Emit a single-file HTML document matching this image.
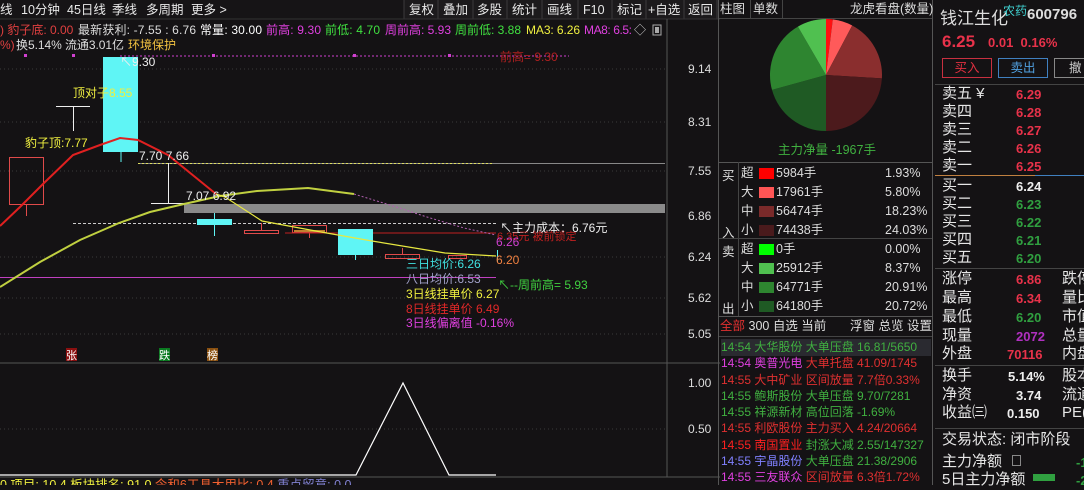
<!DOCTYPE html>
<html><head><meta charset="utf-8"><style>
*{margin:0;padding:0;box-sizing:border-box}
body{width:1084px;height:485px;overflow:hidden;background:#141214;font-family:"Liberation Sans","Noto Sans CJK SC",sans-serif;color:#ddd;position:relative}
.a{position:absolute;white-space:nowrap}
.r13{font-size:12.5px;line-height:19px}
.num{font-weight:bold;font-family:"Liberation Sans",sans-serif}
</style></head><body>

<!-- top toolbar -->
<svg class="a" style="left:0;top:0" width="720" height="20" font-family="Liberation Sans,Noto Sans CJK SC,sans-serif">
<rect x="0" y="0" width="720" height="19" fill="#161416"/>
<rect x="404" y="0" width="314" height="19" fill="#1c1a1c"/>
<g stroke="#3c3a3c"><line x1="404" y1="0" x2="404" y2="19"/><line x1="438" y1="0" x2="438" y2="19"/><line x1="473" y1="0" x2="473" y2="19"/><line x1="507" y1="0" x2="507" y2="19"/><line x1="542" y1="0" x2="542" y2="19"/><line x1="578" y1="0" x2="578" y2="19"/><line x1="612" y1="0" x2="612" y2="19"/><line x1="646" y1="0" x2="646" y2="19"/><line x1="684" y1="0" x2="684" y2="19"/><line x1="717" y1="0" x2="717" y2="19"/></g>
<line x1="0" y1="19" x2="720" y2="19" stroke="#333"/>
<g font-size="12.5" fill="#e8e8e8">
<text x="0" y="14">线</text><text x="21" y="14">10分钟</text><text x="67" y="14">45日线</text><text x="112" y="14">季线</text><text x="146" y="14">多周期</text><text x="191" y="14">更多 &gt;</text>
<text x="409" y="14">复权</text><text x="443" y="14">叠加</text><text x="477" y="14">多股</text><text x="512" y="14">统计</text><text x="547" y="14">画线</text><text x="583" y="14">F10</text><text x="617" y="14">标记</text><text x="648" y="14">+自选</text><text x="688" y="14">返回</text>
</g>
</svg>

<!-- main chart -->
<svg class="a" style="left:0;top:19px" width="720" height="466" viewBox="0 19 720 466" font-family="Liberation Sans,Noto Sans CJK SC,sans-serif">
<g stroke="#3a3a3a" stroke-dasharray="1,3">
<line x1="0" y1="69" x2="668" y2="69"/><line x1="0" y1="122" x2="668" y2="122"/><line x1="0" y1="171" x2="668" y2="171"/><line x1="0" y1="257" x2="668" y2="257"/><line x1="0" y1="298" x2="668" y2="298"/><line x1="0" y1="334" x2="668" y2="334"/><line x1="0" y1="429" x2="668" y2="429"/>
</g>
<line x1="667" y1="19" x2="667" y2="477" stroke="#555"/>
<line x1="0" y1="363" x2="720" y2="363" stroke="#555"/>
<line x1="0" y1="477" x2="720" y2="477" stroke="#555"/>
<g font-size="12" fill="#ddd"><text x="688" y="73">9.14</text><text x="688" y="126">8.31</text><text x="688" y="175">7.55</text><text x="688" y="220">6.86</text><text x="688" y="261">6.24</text><text x="688" y="302">5.62</text><text x="688" y="338">5.05</text><text x="688" y="387">1.00</text><text x="688" y="433">0.50</text></g>

<g font-size="12">
<text x="0" y="34" fill="#e04040">) 豹子底: 0.00</text>
<text x="78" y="34" fill="#ddd" textLength="118">最新获利: -7.55 : 6.76</text>
<text x="200" y="34" fill="#fff" textLength="62">常量: 30.00</text>
<text x="266" y="34" fill="#e040e0" textLength="55">前高: 9.30</text>
<text x="325" y="34" fill="#40e040" textLength="55">前低: 4.70</text>
<text x="385" y="34" fill="#e040e0" textLength="66">周前高: 5.93</text>
<text x="455" y="34" fill="#40e040" textLength="66">周前低: 3.88</text>
<text x="526" y="34" fill="#f0f040" textLength="54">MA3: 6.26</text>
<text x="584" y="34" fill="#e040e0" textLength="48">MA8: 6.5:</text><text x="634" y="34" fill="#ccc">◇</text>
<text x="0" y="49" fill="#e04040">%)</text><text x="16" y="49" fill="#ddd" textLength="108">换5.14% 流通3.01亿</text><text x="128" y="49" fill="#f0c040" textLength="48">环境保护</text>
</g>
<rect x="653" y="25" width="8" height="10" fill="none" stroke="#aaa"/><rect x="655" y="27" width="4" height="6" fill="#aaa"/>

<line x1="120" y1="56" x2="569" y2="56" stroke="#d040d0" stroke-dasharray="2,2"/>
<g fill="#d040d0"><rect x="24" y="54" width="3" height="3"/><rect x="72" y="54" width="3" height="3"/><rect x="212" y="54" width="3" height="3"/><rect x="353" y="54" width="3" height="3"/><rect x="448" y="54" width="3" height="3"/></g>
<text x="500" y="61" font-size="12" fill="#b02020">前高= 9.30</text>

<!-- candles -->
<rect x="9.5" y="157.5" width="34" height="47" fill="none" stroke="#e04a4a"/>
<line x1="26.5" y1="204" x2="26.5" y2="216" stroke="#e04a4a"/>
<line x1="56" y1="106.5" x2="90" y2="106.5" stroke="#eee"/><line x1="73.5" y1="106" x2="73.5" y2="131" stroke="#eee"/>
<rect x="103" y="57" width="35" height="95" fill="#5ff5f5"/><line x1="121" y1="152" x2="121" y2="162" stroke="#5ff5f5"/>
<line x1="138" y1="163.5" x2="665" y2="163.5" stroke="#888"/>
<line x1="138" y1="163.5" x2="494" y2="163.5" stroke="#dddd60" stroke-dasharray="2,2"/>
<line x1="168.5" y1="163" x2="168.5" y2="203" stroke="#eee"/><line x1="151" y1="203.5" x2="184" y2="203.5" stroke="#eee"/>
<rect x="184" y="204" width="481" height="9" fill="#8a8a8a"/>
<line x1="73" y1="223.5" x2="498" y2="223.5" stroke="#ccc" stroke-dasharray="3,2"/>
<rect x="197" y="219" width="35" height="6" fill="#5ff5f5"/><line x1="214.5" y1="213" x2="214.5" y2="236" stroke="#5ff5f5"/>
<rect x="244.5" y="230.5" width="34" height="3" fill="none" stroke="#e04a4a"/><line x1="261.5" y1="223" x2="261.5" y2="230" stroke="#e04a4a"/>
<rect x="292.5" y="225.5" width="34" height="7" fill="none" stroke="#e04a4a"/><rect x="294" y="230" width="31" height="2" fill="#c08030"/><line x1="309.5" y1="233" x2="309.5" y2="238" stroke="#e04a4a"/>
<line x1="285" y1="233" x2="496" y2="233" stroke="#c02020"/>
<rect x="338" y="229" width="35" height="26" fill="#5ff5f5"/><line x1="355.5" y1="255" x2="355.5" y2="260" stroke="#5ff5f5"/>
<rect x="385.5" y="254.5" width="34" height="4" fill="none" stroke="#e04a4a"/><line x1="402.5" y1="248" x2="402.5" y2="254" stroke="#e04a4a"/>
<rect x="448.5" y="255.5" width="18" height="3" fill="none" stroke="#e04a4a"/>
<line x1="497.5" y1="250" x2="497.5" y2="262" stroke="#5ff5f5"/>
<line x1="0" y1="277.5" x2="496" y2="277.5" stroke="#c040c0"/>

<!-- MA lines -->
<polyline points="0,226 20,207 44,183 73,155 100,145 120,138 138,140 168,155 216,194" fill="none" stroke="#e02020" stroke-width="2"/>
<polyline points="0,287 40,262 80,240 119,223 150,212 184,204 220,196 257,191 308,188 354,194" fill="none" stroke="#c0d040" stroke-width="2"/>
<polyline points="354,194 390,205 427,217 464,228 496,235" fill="none" stroke="#b060b0" stroke-dasharray="2,2"/>
<polyline points="216,194 225,197 262,221 321,232 372,241 445,253 496,256" fill="none" stroke="#e8e840" stroke-width="1.2"/>

<g font-size="12">
<text x="120" y="66" fill="#eee">↖9.30</text>
<text x="73" y="97" fill="#f0f040">顶对子8.55</text>
<text x="25" y="147" fill="#f0f040">豹子顶:7.77</text>
<text x="139" y="160" fill="#eee">7.70  7.66</text>
<text x="186" y="200" fill="#eee">7.07  6.92</text>
<text x="500" y="232" fill="#eee">↖主力成本：6.76元</text>
<text x="497" y="240" fill="#c02020" font-size="11">6.35元 被前锁定</text>
<text x="496" y="246" fill="#d040d0">6.26</text>
<text x="496" y="264" fill="#f08040">6.20</text>
<text x="406" y="268" fill="#40e0e0">三日均价:6.26</text>
<text x="406" y="283" fill="#a0a0c8">八日均价:6.53</text>
<text x="498" y="289" fill="#40d040">↖--周前高= 5.93</text>
<text x="406" y="298" fill="#f0f040">3日线挂单价 6.27</text>
<text x="406" y="313" fill="#e02828">8日线挂单价 6.49</text>
<text x="406" y="327" fill="#e040e0">3日线偏离值 -0.16%</text>
</g>
<rect x="66" y="348" width="11" height="13" fill="#8a1010"/><text x="66" y="359" font-size="11" fill="#fff">张</text>
<rect x="159" y="348" width="11" height="13" fill="#0a7a20"/><text x="159" y="359" font-size="11" fill="#fff">跌</text>
<rect x="207" y="348" width="11" height="13" fill="#8a5010"/><text x="207" y="359" font-size="11" fill="#fff">榜</text>

<polyline points="0,475 356,475 403,383 449,475 496,475" fill="none" stroke="#fff" stroke-width="1.2"/>
<text x="0" y="489" font-size="12.5"><tspan fill="#f0f040">0 项目: 10.4 板块排名: 91.0 </tspan><tspan fill="#f06030">今和6工具大用比: 0.4 </tspan><tspan fill="#8080d0">重点留意: 0.0</tspan></text>
</svg>

<!-- middle panel -->
<div class="a" style="left:718px;top:0;width:215px;height:485px;border-left:1px solid #555;border-right:1px solid #555"></div>
<div class="a r13" style="left:720px;top:0;color:#ddd">柱图</div>
<div class="a" style="left:750px;top:0;width:1px;height:18px;background:#444"></div>
<div class="a r13" style="left:753px;top:0;color:#ddd">单数</div>
<div class="a" style="left:782px;top:0;width:1px;height:18px;background:#444"></div>
<div class="a r13" style="left:850px;top:0;color:#ddd">龙虎看盘(数量)</div>
<div class="a" style="left:719px;top:18px;width:213px;height:1px;background:#444"></div>
<svg class="a" style="left:0;top:0" width="1084" height="485" pointer-events="none">
<path d="M826,75 L826,19 A56,56 0 0 1 832.8,19.4 Z" fill="#ff1010"/>
<path d="M826,75 L832.8,19.4 A56,56 0 0 1 852.2,25.5 Z" fill="#ff5a5a"/>
<path d="M826,75 L852.2,25.5 A56,56 0 0 1 881.9,78.4 Z" fill="#8a2e2e"/>
<path d="M826,75 L881.9,78.4 A56,56 0 0 1 826,131 Z" fill="#4c1a1c"/>
<path d="M826,75 L826,131 A56,56 0 0 1 772,89.9 Z" fill="#1f5a24"/>
<path d="M826,75 L772,89.9 A56,56 0 0 1 797.9,26.6 Z" fill="#2e8530"/>
<path d="M826,75 L797.9,26.6 A56,56 0 0 1 826,19 Z" fill="#50c050"/>
</svg>
<div class="a" style="left:778px;top:139px;font-size:12.5px;color:#40b040">主力净量 -1967手</div>
<div class="a" style="left:719px;top:162px;width:213px;height:1px;background:#555"></div>
<div class="a" style="left:738px;top:162px;width:1px;height:155px;background:#444"></div>
<div class="a" style="left:719px;top:238px;width:213px;height:1px;background:#444"></div>
<div class="a" style="left:719px;top:316px;width:213px;height:1px;background:#555"></div>
<div class="a" style="left:0;top:0;font-size:12.5px;color:#ddd">
<div class="a" style="left:722px;top:165px">买</div><div class="a" style="left:722px;top:222px">入</div>
<div class="a" style="left:722px;top:241px">卖</div><div class="a" style="left:722px;top:298px">出</div>
</div>
<div class="a" style="left:741px;top:0;font-size:12.5px;color:#ddd;line-height:19px">
<div class="a" style="top:164px">超</div><div class="a" style="top:183px">大</div><div class="a" style="top:202px">中</div><div class="a" style="top:221px">小</div>
<div class="a" style="top:240px">超</div><div class="a" style="top:259px">大</div><div class="a" style="top:278px">中</div><div class="a" style="top:297px">小</div>
<div class="a" style="left:18px;top:168px;width:15px;height:11px;background:#ff0000"></div>
<div class="a" style="left:18px;top:187px;width:15px;height:11px;background:#ff5555"></div>
<div class="a" style="left:18px;top:206px;width:15px;height:11px;background:#7a2a2a"></div>
<div class="a" style="left:18px;top:225px;width:15px;height:11px;background:#4a1a1c"></div>
<div class="a" style="left:18px;top:244px;width:15px;height:11px;background:#00ff00"></div>
<div class="a" style="left:18px;top:263px;width:15px;height:11px;background:#50c050"></div>
<div class="a" style="left:18px;top:282px;width:15px;height:11px;background:#2e8530"></div>
<div class="a" style="left:18px;top:301px;width:15px;height:11px;background:#1f5a24"></div>
<div class="a" style="left:35px;top:164px">5984手</div><div class="a" style="left:35px;top:183px">17961手</div><div class="a" style="left:35px;top:202px">56474手</div><div class="a" style="left:35px;top:221px">74438手</div>
<div class="a" style="left:35px;top:240px">0手</div><div class="a" style="left:35px;top:259px">25912手</div><div class="a" style="left:35px;top:278px">64771手</div><div class="a" style="left:35px;top:297px">64180手</div>
<div class="a" style="left:144px;top:164px">1.93%</div><div class="a" style="left:144px;top:183px">5.80%</div><div class="a" style="left:144px;top:202px">18.23%</div><div class="a" style="left:144px;top:221px">24.03%</div>
<div class="a" style="left:144px;top:240px">0.00%</div><div class="a" style="left:144px;top:259px">8.37%</div><div class="a" style="left:144px;top:278px">20.91%</div><div class="a" style="left:144px;top:297px">20.72%</div>
</div>
<div class="a" style="left:720px;top:318px;font-size:12.5px;line-height:17px;color:#ddd"><span style="color:#e03030">全部</span> 300 自选 当前</div>
<div class="a" style="left:850px;top:318px;font-size:12.5px;line-height:17px;color:#ddd">浮窗 总览 设置</div>
<div class="a" style="left:719px;top:336px;width:213px;height:1px;background:#444"></div>
<div class="a" style="left:721px;top:339px;width:210px;height:17px;background:#2a2a30"></div>
<div class="a" style="left:721px;top:339px;font-size:12px;line-height:16.3px">
<div style="color:#40b040">14:54 大华股份 大单压盘 16.81/5650</div>
<div style="color:#e040e0">14:54 奥普光电 <span style="color:#e03030">大单托盘 41.09/1745</span></div>
<div style="color:#e03030">14:55 大中矿业 区间放量 7.7倍0.33%</div>
<div style="color:#40b040">14:55 鲍斯股份 大单压盘 9.70/7281</div>
<div style="color:#40b040">14:55 祥源新材 高位回落 -1.69%</div>
<div style="color:#e03030">14:55 利欧股份 主力买入 4.24/20664</div>
<div style="color:#ff2020">14:55 南国置业 <span style="color:#40b040">封涨大减 2.55/147327</span></div>
<div style="color:#8080ff">14:55 宇晶股份 <span style="color:#40b040">大单压盘 21.38/2906</span></div>
<div style="color:#e040e0">14:55 三友联众 <span style="color:#e03030">区间放量 6.3倍1.72%</span></div>
</div>

<!-- right panel -->
<div class="a" style="left:940px;top:4px;font-size:17px;color:#ddd">钱江生化</div>
<div class="a" style="left:1003px;top:2px;font-size:12px;color:#40d0d0">农药</div>
<div class="a num" style="left:1027px;top:6px;font-size:15px;color:#ddd">600796</div>
<div class="a num" style="left:942px;top:32px;font-size:17px;color:#e8324a">6.25</div>
<div class="a num" style="left:988px;top:35px;font-size:13px;color:#e8324a">0.01&nbsp; 0.16%</div>
<div class="a" style="left:942px;top:58px;width:50px;height:20px;border:1px solid #c83040;color:#e03040;font-size:12.5px;text-align:center;line-height:18px">买入</div>
<div class="a" style="left:998px;top:58px;width:50px;height:20px;border:1px solid #4080c0;color:#50a0e0;font-size:12.5px;text-align:center;line-height:18px">卖出</div>
<div class="a" style="left:1054px;top:58px;width:40px;height:20px;border:1px solid #888;color:#ccc;font-size:12.5px;padding-left:14px;line-height:18px">撤</div>
<div class="a" style="left:935px;top:84px;width:149px;height:1px;background:#444"></div>
<div class="a" style="left:942px;top:0;font-size:15px;color:#e6e6e6;line-height:18px">
<div class="a" style="top:85px">卖五 ¥</div><div class="a" style="top:103px">卖四</div><div class="a" style="top:121px">卖三</div><div class="a" style="top:139px">卖二</div><div class="a" style="top:157px">卖一</div>
<div class="a" style="top:177px">买一</div><div class="a" style="top:195px">买二</div><div class="a" style="top:213px">买三</div><div class="a" style="top:231px">买四</div><div class="a" style="top:249px">买五</div>
<div class="a" style="top:270px">涨停</div><div class="a" style="top:289px">最高</div><div class="a" style="top:308px">最低</div><div class="a" style="top:327px">现量</div><div class="a" style="top:345px">外盘</div>
<div class="a" style="top:367px">换手</div><div class="a" style="top:386px">净资</div><div class="a" style="top:404px">收益㈢</div>
<div class="a" style="top:431px">交易状态: 闭市阶段</div>
<div class="a" style="top:453px">主力净额</div><div class="a" style="top:471px">5日主力净额</div>
<div class="a" style="left:120px;top:270px">跌停</div><div class="a" style="left:120px;top:289px">量比</div><div class="a" style="left:120px;top:308px">市值</div><div class="a" style="left:120px;top:327px">总量</div><div class="a" style="left:120px;top:345px">内盘</div>
<div class="a" style="left:120px;top:367px">股本</div><div class="a" style="left:120px;top:386px">流通</div><div class="a" style="left:120px;top:404px">PE(</div>
</div>
<div class="a num" style="left:1016px;top:0;font-size:13px;line-height:18px">
<div class="a" style="top:86px;color:#e8324a">6.29</div><div class="a" style="top:104px;color:#e8324a">6.28</div><div class="a" style="top:122px;color:#e8324a">6.27</div><div class="a" style="top:140px;color:#e8324a">6.26</div><div class="a" style="top:158px;color:#e8324a">6.25</div>
<div class="a" style="top:178px;color:#eee">6.24</div><div class="a" style="top:196px;color:#30a040">6.23</div><div class="a" style="top:214px;color:#30a040">6.22</div><div class="a" style="top:232px;color:#30a040">6.21</div><div class="a" style="top:250px;color:#30a040">6.20</div>
<div class="a" style="top:271px;color:#e8324a">6.86</div><div class="a" style="top:290px;color:#e8324a">6.34</div><div class="a" style="top:309px;color:#30a040">6.20</div>
<div class="a" style="top:328px;color:#b030c0">2072</div><div class="a" style="left:-9px;top:346px;color:#e8324a">70116</div>
<div class="a" style="left:-8px;top:368px;color:#eee">5.14%</div><div class="a" style="top:387px;color:#eee">3.74</div><div class="a" style="left:-9px;top:405px;color:#eee">0.150</div>
<div class="a" style="left:60px;top:454px;color:#30a040">-12</div><div class="a" style="left:60px;top:472px;color:#30a040">-2</div>
</div>
<div class="a" style="left:935px;top:175px;width:100px;height:1px;background:#c08040"></div>
<div class="a" style="left:1035px;top:175px;width:49px;height:1px;background:#4080c0"></div>
<div class="a" style="left:935px;top:268px;width:149px;height:1px;background:#444"></div>
<div class="a" style="left:935px;top:365px;width:149px;height:1px;background:#444"></div>
<div class="a" style="left:935px;top:428px;width:149px;height:1px;background:#444"></div>
<div class="a" style="left:1012px;top:455px;width:9px;height:11px;border:1px solid #888"></div>
<div class="a" style="left:1033px;top:474px;width:22px;height:7px;background:#30a040"></div>
</body></html>
